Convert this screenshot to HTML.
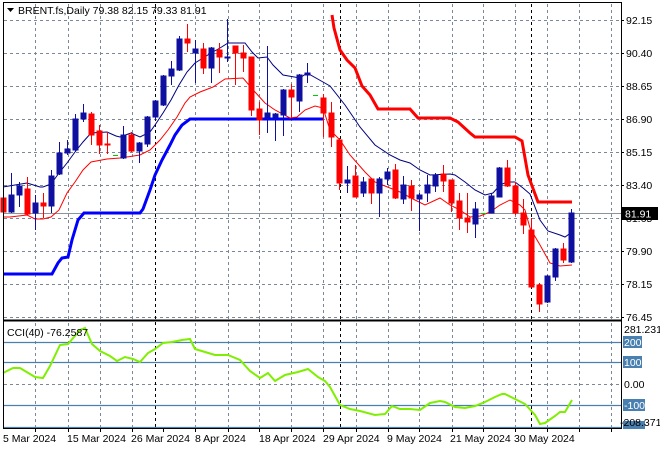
<!DOCTYPE html>
<html><head><meta charset="utf-8"><style>
body{margin:0;background:#fff;width:660px;height:450px;overflow:hidden}
svg{display:block}
text{font-family:"Liberation Sans",sans-serif;font-size:10.5px;fill:#000}
</style></head><body>
<svg width="660" height="450" viewBox="0 0 660 450" xmlns="http://www.w3.org/2000/svg">
<rect width="660" height="450" fill="#fff"/>
<!-- grid main -->
<g stroke="#7a8898" stroke-width="1" stroke-dasharray="3,3" fill="none">
<path d="M4 20.5H621M4 53.5H621M4 86.5H621M4 119.5H621M4 152.5H621M4 185.5H621M4 218.5H621M4 251.5H621M4 284.5H621M4 317.5H621"/>
<path d="M4 384.5H621"/>
<path d="M35.5 4V320M68.5 4V320M100.5 4V320M132.5 4V320M195.5 4V320M228.5 4V320M259.5 4V320M291.5 4V320M323.5 4V320M356.5 4V320M388.5 4V320M419.5 4V320M452.5 4V320M483.5 4V320M515.5 4V320M547.5 4V320M579.5 4V320M611.5 4V320"/>
<path d="M35.5 323V428M68.5 323V428M100.5 323V428M132.5 323V428M195.5 323V428M228.5 323V428M259.5 323V428M291.5 323V428M323.5 323V428M356.5 323V428M388.5 323V428M419.5 323V428M452.5 323V428M483.5 323V428M515.5 323V428M547.5 323V428M579.5 323V428M611.5 323V428"/>
</g>
<g stroke="#000" stroke-width="1" stroke-dasharray="3,3">
<path d="M155.5 4V428M340.5 4V428M531.5 4V428"/>
</g>
<!-- price line -->
<path d="M4 213.5H621" stroke="#8a949c" stroke-width="1"/>
<!-- CCI levels -->
<g stroke="#4a80b0" stroke-width="1.2">
<path d="M4 342.5H621M4 362.5H621M4 405.5H621M4 427.5H621"/>
</g>
<!-- thick blue -->
<polyline fill="none" stroke="#0000ff" stroke-width="3" points="3,274 52,274 58,263 62,258 68,257 72,240 78,220 84,213 140,213 143,209 150,190 155,175 162,160 170,145 175,135 182,125 190,119 323,119"/>
<!-- thick red -->
<polyline fill="none" stroke="#ff0000" stroke-width="3" points="332,15 334,28 340,50 347,60 355,68 362,86 370,95 378,109 410,109 418,118 450,118 458,122 470,133 475,137 515,137 522,141 528,175 538,202 572,202"/>
<!-- navy line -->
<polyline fill="none" stroke="#000080" stroke-width="1" points="3,187 27,183 40,187 43,187 51,184 59,173 67,163 75,152 83,142 91,133 107,132 116,136 120,137 131,133 140,137 150,132 155,125 163,113 171,100 179,85 187,72 195,63 203,58 211,53 220,48 228,43 245,43 252,52 258,58 267,57 273,65 283,75 300,78 307,73 323,82 330,86 345,105 360,127 375,145 390,155 400,160 410,163 420,170 430,175 450,174 455,175 465,182 475,190 485,195 493,193 500,185 507,182 515,182 523,188 530,194 540,220 548,231 560,235 565,237 572,232"/>
<!-- red thin line -->
<polyline fill="none" stroke="#ff0000" stroke-width="1" points="3,217 10,217 27,215 35,219 43,219 51,217 59,210 67,193 75,182 83,170 91,162 107,159 120,158 140,155 150,150 160,140 168,130 177,117 185,103 190,97 200,92 213,87 225,79 243,78 255,92 265,103 275,110 290,118 297,117 305,110 315,106 323,108 330,130 340,140 350,155 365,172 375,182 390,188 400,192 415,200 425,205 440,198 450,205 460,210 470,217 480,216 490,212 500,205 510,200 520,205 525,210 530,228 540,245 550,263 560,266 572,265"/>
<!-- candles -->
<g stroke-width="1" shape-rendering="crispEdges">
<g stroke="#ff0000" fill="#ff0000">
<line x1="3.5" y1="198" x2="3.5" y2="212"/><rect x="1" y="198" width="5" height="14"/>
<line x1="27.5" y1="177" x2="27.5" y2="215"/><rect x="25" y="189" width="5" height="25"/>
<line x1="43.5" y1="193" x2="43.5" y2="218"/><rect x="41" y="203" width="5" height="3"/>
<line x1="91.5" y1="112" x2="91.5" y2="145"/><rect x="89" y="114" width="5" height="21"/>
<line x1="99.5" y1="125" x2="99.5" y2="154"/><rect x="97" y="131" width="5" height="14"/>
<line x1="107.5" y1="132" x2="107.5" y2="154"/><rect x="105" y="144" width="5" height="1"/>
<line x1="131.5" y1="132" x2="131.5" y2="152"/><rect x="129" y="135" width="5" height="16"/>
<line x1="187.5" y1="24" x2="187.5" y2="52"/><rect x="185" y="39" width="5" height="4"/>
<line x1="203.5" y1="43" x2="203.5" y2="74"/><rect x="201" y="49" width="5" height="19"/>
<line x1="219.5" y1="43" x2="219.5" y2="73"/><rect x="217" y="50" width="5" height="7"/>
<line x1="235.5" y1="46" x2="235.5" y2="85"/><rect x="233" y="46" width="5" height="7"/>
<line x1="243.5" y1="45" x2="243.5" y2="72"/><rect x="241" y="53" width="5" height="5"/>
<line x1="251.5" y1="57" x2="251.5" y2="116"/><rect x="249" y="57" width="5" height="53"/>
<line x1="259.5" y1="102" x2="259.5" y2="135"/><rect x="257" y="109" width="5" height="11"/>
<line x1="291.5" y1="84" x2="291.5" y2="118"/><rect x="289" y="90" width="5" height="7"/>
<line x1="323.5" y1="94" x2="323.5" y2="137"/><rect x="321" y="98" width="5" height="15"/>
<line x1="331.5" y1="102" x2="331.5" y2="147"/><rect x="329" y="113" width="5" height="24"/>
<line x1="339.5" y1="138" x2="339.5" y2="190"/><rect x="337" y="140" width="5" height="43"/>
<line x1="355.5" y1="165" x2="355.5" y2="197"/><rect x="353" y="176" width="5" height="21"/>
<line x1="371.5" y1="178" x2="371.5" y2="204"/><rect x="369" y="179" width="5" height="14"/>
<line x1="395.5" y1="164" x2="395.5" y2="199"/><rect x="393" y="170" width="5" height="28"/>
<line x1="411.5" y1="180" x2="411.5" y2="211"/><rect x="409" y="186" width="5" height="12"/>
<line x1="443.5" y1="165" x2="443.5" y2="192"/><rect x="441" y="174" width="5" height="7"/>
<line x1="451.5" y1="180" x2="451.5" y2="212"/><rect x="449" y="180" width="5" height="23"/>
<line x1="459.5" y1="193" x2="459.5" y2="230"/><rect x="457" y="201" width="5" height="17"/>
<line x1="467.5" y1="193" x2="467.5" y2="233"/><rect x="465" y="218" width="5" height="4"/>
<line x1="507.5" y1="160" x2="507.5" y2="187"/><rect x="505" y="168" width="5" height="18"/>
<line x1="515.5" y1="182" x2="515.5" y2="215"/><rect x="513" y="186" width="5" height="27"/>
<line x1="523.5" y1="199" x2="523.5" y2="234"/><rect x="521" y="213" width="5" height="12"/>
<line x1="531.5" y1="218" x2="531.5" y2="287"/><rect x="529" y="230" width="5" height="57"/>
<line x1="539.5" y1="283" x2="539.5" y2="312"/><rect x="537" y="285" width="5" height="19"/>
<line x1="563.5" y1="243" x2="563.5" y2="263"/><rect x="561" y="249" width="5" height="11"/>
</g>
<g stroke="#1010a0" fill="#1010a0">
<line x1="11.5" y1="173" x2="11.5" y2="213"/><rect x="9" y="195" width="5" height="17"/>
<line x1="19.5" y1="182" x2="19.5" y2="207"/><rect x="17" y="186" width="5" height="9"/>
<line x1="35.5" y1="195" x2="35.5" y2="230"/><rect x="33" y="203" width="5" height="10"/>
<line x1="51.5" y1="170" x2="51.5" y2="213"/><rect x="49" y="176" width="5" height="30"/>
<line x1="59.5" y1="142" x2="59.5" y2="175"/><rect x="57" y="153" width="5" height="21"/>
<line x1="67.5" y1="140" x2="67.5" y2="155"/><rect x="65" y="149" width="5" height="4"/>
<line x1="75.5" y1="114" x2="75.5" y2="152"/><rect x="73" y="119" width="5" height="31"/>
<line x1="83.5" y1="104" x2="83.5" y2="122"/><rect x="81" y="113" width="5" height="6"/>
<line x1="123.5" y1="126" x2="123.5" y2="159"/><rect x="121" y="135" width="5" height="23"/>
<line x1="139.5" y1="142" x2="139.5" y2="163"/><rect x="137" y="143" width="5" height="8"/>
<line x1="147.5" y1="116" x2="147.5" y2="147"/><rect x="145" y="117" width="5" height="27"/>
<line x1="155.5" y1="100" x2="155.5" y2="120"/><rect x="153" y="101" width="5" height="16"/>
<line x1="163.5" y1="75" x2="163.5" y2="106"/><rect x="161" y="76" width="5" height="29"/>
<line x1="171.5" y1="61" x2="171.5" y2="85"/><rect x="169" y="69" width="5" height="7"/>
<line x1="179.5" y1="36" x2="179.5" y2="71"/><rect x="177" y="39" width="5" height="31"/>
<line x1="195.5" y1="40" x2="195.5" y2="83"/><rect x="193" y="49" width="5" height="4"/>
<line x1="211.5" y1="47" x2="211.5" y2="83"/><rect x="209" y="48" width="5" height="20"/>
<line x1="227.5" y1="19" x2="227.5" y2="62"/><rect x="225" y="57" width="5" height="1"/>
<line x1="267.5" y1="46" x2="267.5" y2="133"/><rect x="265" y="113" width="5" height="4"/>
<line x1="275.5" y1="113" x2="275.5" y2="141"/><rect x="273" y="114" width="5" height="3"/>
<line x1="283.5" y1="89" x2="283.5" y2="136"/><rect x="281" y="90" width="5" height="25"/>
<line x1="299.5" y1="74" x2="299.5" y2="112"/><rect x="297" y="75" width="5" height="26"/>
<line x1="307.5" y1="63" x2="307.5" y2="83"/><rect x="305" y="73" width="5" height="2"/>
<line x1="347.5" y1="166" x2="347.5" y2="193"/><rect x="345" y="180" width="5" height="3"/>
<line x1="363.5" y1="177" x2="363.5" y2="197"/><rect x="361" y="182" width="5" height="11"/>
<line x1="379.5" y1="177" x2="379.5" y2="217"/><rect x="377" y="179" width="5" height="14"/>
<line x1="387.5" y1="168" x2="387.5" y2="185"/><rect x="385" y="172" width="5" height="7"/>
<line x1="403.5" y1="176" x2="403.5" y2="204"/><rect x="401" y="185" width="5" height="14"/>
<line x1="419.5" y1="193" x2="419.5" y2="231"/><rect x="417" y="195" width="5" height="4"/>
<line x1="427.5" y1="175" x2="427.5" y2="202"/><rect x="425" y="185" width="5" height="8"/>
<line x1="435.5" y1="173" x2="435.5" y2="192"/><rect x="433" y="175" width="5" height="11"/>
<line x1="475.5" y1="202" x2="475.5" y2="238"/><rect x="473" y="209" width="5" height="15"/>
<line x1="491.5" y1="193" x2="491.5" y2="213"/><rect x="489" y="196" width="5" height="17"/>
<line x1="499.5" y1="167" x2="499.5" y2="197"/><rect x="497" y="168" width="5" height="29"/>
<line x1="547.5" y1="275" x2="547.5" y2="303"/><rect x="545" y="276" width="5" height="26"/>
<line x1="555.5" y1="248" x2="555.5" y2="281"/><rect x="553" y="249" width="5" height="28"/>
<line x1="571.5" y1="209" x2="571.5" y2="263"/><rect x="569" y="213" width="5" height="49"/>
</g>
<g stroke="#00cc00">
<path d="M113 155.5H118M313 95.5H318M481 213.5H486"/>
</g>
</g>
<!-- CCI line -->
<polyline fill="none" stroke="#7fef00" stroke-width="2" points="3,373 13,368 20,368 35,377 43,378 50,366 60,345 68,344 80,330 85,328 92,344 100,351 110,356 117,361 125,357 133,359 140,362 148,353 155,349 163,343 172,342 182,340 190,339 195,349 205,352 215,355 228,355 240,360 250,371 260,378 268,373 275,381 285,375 298,372 308,369 318,377 325,381 330,387 340,405 350,409 360,411 375,415 385,414 392,406 400,409 410,409 420,410 430,403 440,401 445,402 455,407 465,408 475,406 485,402 495,397 502,394 505,394 515,399 525,404 535,415 540,424 545,423 555,416 560,412 565,412 572,400"/>
<!-- borders -->
<g stroke="#000" fill="none">
<path d="M3.5 3V429" stroke-width="1"/>
<path d="M3 2.5H621.5V429" stroke-width="1"/>
<path d="M3 320.5H622" stroke-width="2"/>
<path d="M3 428.5H622" stroke-width="1"/>
</g>
<g stroke="#000" stroke-width="1">
<path d="M621 20.5h3M621 53.5h3M621 86.5h3M621 119.5h3M621 152.5h3M621 185.5h3M621 251.5h3M621 284.5h3M621 317.5h3"/>
<path d="M35.5 429v3M68.5 429v3M100.5 429v3M132.5 429v3M163.5 429v3M195.5 429v3M228.5 429v3M259.5 429v3M291.5 429v3M323.5 429v3M356.5 429v3M388.5 429v3M419.5 429v3M452.5 429v3M483.5 429v3M515.5 429v3M547.5 429v3M579.5 429v3M611.5 429v3"/>
</g>
<!-- title -->
<path d="M7 8h7l-3.5 4z" fill="#000"/>
<text x="18" y="14">BRENT.fs,Daily  79.38 82.15 79.33 81.91</text>
<text x="7" y="336">CCI(40) -76.2587</text>
<!-- right axis labels -->
<g>
<text x="626" y="24">92.15</text>
<text x="626" y="57">90.40</text>
<text x="626" y="90">88.65</text>
<text x="626" y="123">86.90</text>
<text x="626" y="156">85.15</text>
<text x="626" y="189">83.40</text>
<text x="626" y="222">81.65</text>
<text x="626" y="255">79.90</text>
<text x="626" y="288">78.15</text>
<text x="626" y="321">76.45</text>
</g>
<rect x="621" y="207" width="37" height="13" fill="#000"/>
<text x="625" y="217.5" style="fill:#fff">81.91</text>
<text x="624" y="333">281.2317</text>
<rect x="623" y="336" width="19" height="12" fill="#4a80b0"/>
<text x="624" y="346" style="fill:#fff">200</text>
<rect x="623" y="356" width="19" height="12" fill="#4a80b0"/>
<text x="624" y="366" style="fill:#fff">100</text>
<text x="624" y="388">0.00</text>
<rect x="623" y="399" width="22" height="12" fill="#4a80b0"/>
<text x="624" y="409" style="fill:#fff">-100</text>
<rect x="623" y="421" width="22" height="8" fill="#4a80b0"/>
<text x="620" y="426">-208.371</text>
<!-- date labels -->
<g>
<text x="3" y="442">5 Mar 2024</text>
<text x="67" y="442">15 Mar 2024</text>
<text x="131" y="442">26 Mar 2024</text>
<text x="195" y="442">8 Apr 2024</text>
<text x="259" y="442">18 Apr 2024</text>
<text x="323" y="442">29 Apr 2024</text>
<text x="387" y="442">9 May 2024</text>
<text x="450" y="442">21 May 2024</text>
<text x="514" y="442">30 May 2024</text>
</g>
</svg>
</body></html>
